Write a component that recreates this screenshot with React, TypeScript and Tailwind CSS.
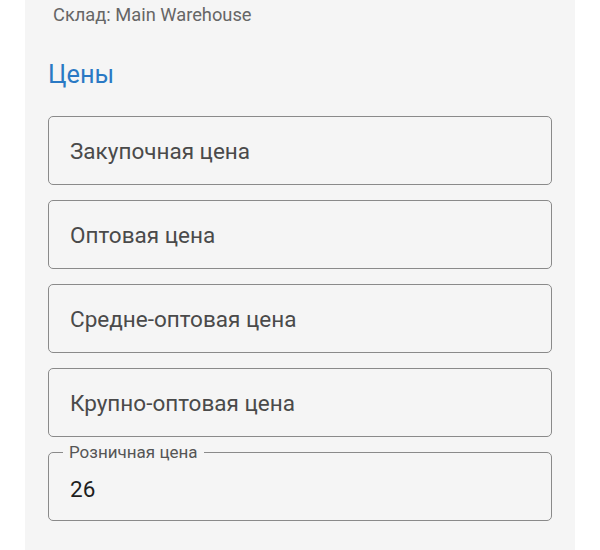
import React from 'react';

const priceFields = ['Закупочная цена', 'Оптовая цена', 'Средне-оптовая цена', 'Крупно-оптовая цена'];

const EmptyField: React.FC<{ label: string }> = ({ label }) => (
    <div className="h-[69px] rounded-[5px] border-[1.5px] border-[#8a8a8a] flex items-center pl-[21px]">
        <span className="text-[22.5px] leading-[26px] text-[#4a4a4a]">{label}</span>
    </div>
);

export default function App() {
    return (
        <div className="min-h-[550px] bg-white" style={{ fontFamily: 'Roboto, "Noto Sans", sans-serif' }}>
            <div className="ml-[25px] w-[550px] min-h-[550px] bg-[#f5f5f5] px-[23px]">
                <div className="pl-[5px] pt-[4px] text-[18.3px] leading-[22px] text-[#666666]">Склад: Main Warehouse</div>

                <h2 className="mt-[35px] text-[25.3px] leading-[28px] text-[#2a79c4]">Цены</h2>

                <div className="mt-[27px] flex flex-col gap-[15px]">
                    {priceFields.map((label) => (
                        <EmptyField key={label} label={label} />
                    ))}

                    <fieldset className="h-[78px] -mt-[9px] rounded-[5px] border-[1.5px] border-[#8a8a8a] pl-[14px] pr-[21px]">
                        <legend className="px-[6px] text-[17px] leading-[18px] text-[#555555]">Розничная цена</legend>
                        <div className="pl-[7px] pt-[15px] text-[22.5px] leading-[26px] text-[#1e1e1e]">26</div>
                    </fieldset>
                </div>
            </div>
        </div>
    );
}
